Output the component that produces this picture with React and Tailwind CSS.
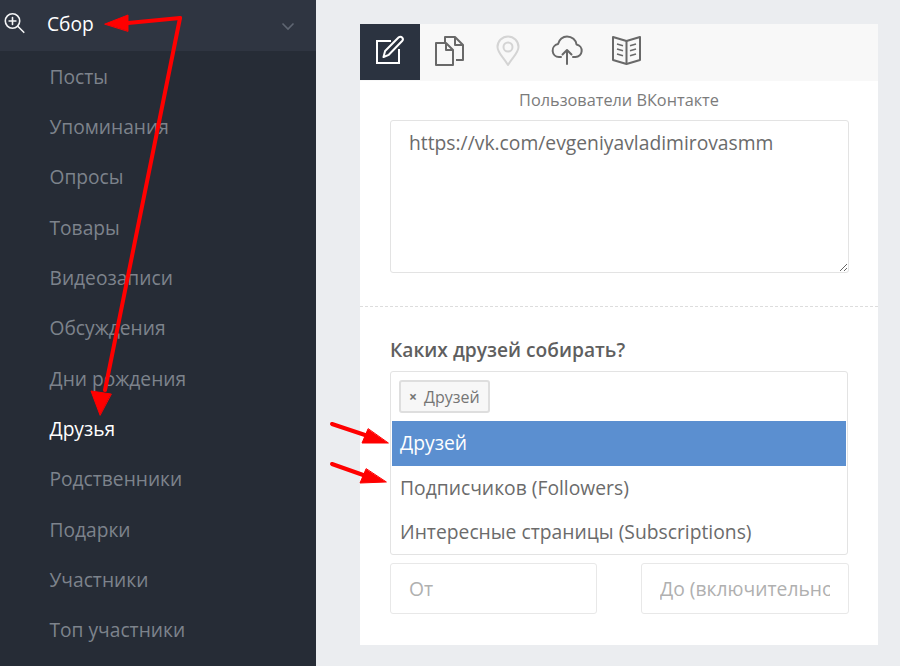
import React from "react";

const navItems = [
  "Посты",
  "Упоминания",
  "Опросы",
  "Товары",
  "Видеозаписи",
  "Обсуждения",
  "Дни рождения",
  "Друзья",
  "Родственники",
  "Подарки",
  "Участники",
  "Топ участники",
];

const Sidebar = () => (
  <aside className="w-[316px] shrink-0 h-full bg-[#262c36] overflow-hidden">
    <div className="h-[51px] bg-[#2f3541] flex items-center">
      <svg width="24" height="24" viewBox="0 0 24 24" fill="none" stroke="#f4f5f6" strokeWidth="1.6" strokeLinecap="round" className="ml-[2px] mt-[-5px]">
        <circle cx="10.5" cy="10" r="7.2" />
        <path d="M10.5 6.6v6.8M7.1 10h6.8M15.8 15.3l6 6" />
      </svg>
      <span className="ml-[21px] mt-[-2px] text-[19.2px] text-white font-medium">Сбор</span>
      <svg width="14" height="14" viewBox="0 0 14 14" fill="none" stroke="#5f6672" strokeWidth="1.6" className="ml-auto mr-[21px]">
        <path d="M1.5 4.5 7 10l5.5-5.5" />
      </svg>
    </div>
    <nav className="flex flex-col pt-[0.8px]">
      {navItems.map((item) => (
        <a
          key={item}
          className={`h-[50.35px] flex items-center pl-[49.5px] text-[19.2px] ${
            item === "Друзья" ? "text-white font-medium" : "text-[#7d838c]"
          }`}
        >
          {item}
        </a>
      ))}
    </nav>
  </aside>
);

const Tabs = () => (
  <div className="h-[57px] bg-[#f8f8f8] flex items-start">
    <div className="w-[60px] h-[56px] pb-[4px] bg-[#2b3340] flex items-center justify-center">
      <svg width="30" height="30" viewBox="0 0 30 30" fill="none" stroke="#fff" strokeWidth="2">
        <path d="M16 6H2v22h22V14" />
        <path d="M8.5 22l1.6-6L23.500 2.500c1.200-1.100 2.700-1 3.600 0 1 1 1 2.400 0 3.500L13.800 19.800z" strokeLinejoin="round" />
      </svg>
    </div>
    <div className="w-[58px] h-[56px] pb-[4px] flex items-center justify-center">
      <svg width="31" height="31" viewBox="0 0 31 31" fill="none" stroke="#696969" strokeWidth="2" strokeLinejoin="round">
        <path d="M12 8H2v22h17V15z" />
        <path d="M12 8v7h7" />
        <path d="M11 8V2h10l8 8v15h-7" />
        <path d="M21 2v8h8" />
      </svg>
    </div>
    <div className="w-[60px] h-[56px] pb-[4px] flex items-center justify-center">
      <svg width="24" height="31" viewBox="0 0 24 31" fill="none" stroke="#d4d4d4" strokeWidth="2">
        <path d="M12 30C7 22 1.500 17.500 1.500 12a10.500 10.500 0 0 1 21 0c0 5.500-5.500 10-10.500 18z" strokeLinejoin="round" />
        <circle cx="12" cy="12" r="4.500" />
      </svg>
    </div>
    <div className="w-[58px] h-[56px] pb-[4px] flex items-center justify-center">
      <svg width="32" height="30" viewBox="0 0 32 30" fill="none" stroke="#696969" strokeWidth="2" strokeLinecap="round" strokeLinejoin="round">
        <path d="M10 22H8a6.500 6.500 0 0 1-1-12.900C8 4.500 12 1.500 16 1.500c5 0 9 3.500 9.500 8A6.300 6.300 0 0 1 24.500 22H22" />
        <path d="M16 29V15M11.500 19.500 16 15l4.500 4.500" />
      </svg>
    </div>
    <div className="w-[60px] h-[56px] pb-[4px] flex items-center justify-center">
      <svg width="31" height="31" viewBox="0 0 31 31" fill="none" stroke="#696969" strokeWidth="2" strokeLinejoin="round">
        <path d="M15.500 6 2 2v23l13.500 4 13.500-4V2z" />
        <path d="M15.500 6v23" />
        <path d="M6 9l6 1.800M6 14l6 1.800M6 19l6 1.800M25 9l-6 1.800M25 14l-6 1.800M25 19l-6 1.800" strokeWidth="1.600" />
      </svg>
    </div>
  </div>
);

const FriendsSelect = () => (
  <div className="border border-[#e3e3e3] rounded-[3px] bg-white px-px">
    <div className="h-[49px] flex items-center pl-[7px]">
      <span className="h-[33px] w-[91px] flex items-center gap-[7px] pl-[8px] border-2 border-[#dedede] rounded-[3px] bg-[#f7f7f7] text-[16px] text-[#757575]">
        <span className="text-[14px] font-bold">×</span>
        Друзей
      </span>
    </div>
    <div className="h-[45px] flex items-center pl-[8px] bg-[#5b8fd0] text-white text-[19.3px]">Друзей</div>
    <div className="h-[45px] flex items-center pl-[8px] text-[#6b6b6b] text-[19.3px]">Подписчиков (Followers)</div>
    <div className="h-[43px] flex items-center pl-[8px] text-[#6b6b6b] text-[19.3px]">Интересные страницы (Subscriptions)</div>
  </div>
);

const FormPanel = () => (
  <div className="w-[518px] h-[621px] mt-[24px] ml-[44px] bg-white flex flex-col overflow-hidden">
    <Tabs />
    <p className="mt-[8px] h-[22px] flex items-center justify-center text-[16.3px] text-[#7b7b7b]">
      Пользователи ВКонтакте
    </p>
    <div className="mx-[30px] mt-[9px] relative">
      <textarea
        readOnly
        value="https://vk.com/evgeniyavladimirovasmm"
        className="block w-[459px] h-[153px] border border-[#e3e3e3] rounded-[3px] px-[18px] py-[8px] text-[19.3px] text-[#6b6b6b] outline-none resize-y"
      />
    </div>
    <div className="mt-[33px] border-t border-dashed border-[#dddddd]" />
    <div className="px-[30px] flex flex-col">
      <h3 className="mt-[30px] h-[26px] flex items-center text-[19.2px] font-semibold text-[#5f5f5f]">
        Каких друзей собирать?
      </h3>
      <div className="mt-[8px]">
        <FriendsSelect />
      </div>
      <div className="mt-[8px] w-[459px] flex justify-between">
        <input
          placeholder="От"
          className="w-[207px] h-[51px] border border-[#e8e8e8] rounded-[3px] px-[18px] text-[19.3px] outline-none placeholder:text-[#b0b0b0]"
        />
        <input
          placeholder="До (включительно)"
          className="w-[208px] h-[51px] border border-[#e8e8e8] rounded-[3px] px-[18px] text-[19.3px] outline-none placeholder:text-[#b0b0b0]"
        />
      </div>
    </div>
  </div>
);

// red annotation arrows drawn on top of the screenshot
const Arrows = () => (
  <svg width="900" height="666" viewBox="0 0 900 666" className="absolute inset-0 pointer-events-none">
    <g fill="#ff0000" stroke="#ff0000" strokeLinecap="round" strokeLinejoin="round">
      <path d="M180 18 128 23" strokeWidth="4" fill="none" />
      <path d="M105 24 128 15 128 31z" strokeWidth="1" />
      <path d="M180 18 105 390" strokeWidth="4" fill="none" />
      <path d="M100 415 91 391 111 394z" strokeWidth="1" />
      <path d="M332 424 368 436" strokeWidth="4" fill="none" />
      <path d="M388 443 362 443 368 429z" strokeWidth="1" />
      <path d="M332 464 366 476" strokeWidth="4" fill="none" />
      <path d="M386 482 360 483 366 469z" strokeWidth="1" />
    </g>
  </svg>
);

export default function App() {
  return (
    <div className="relative w-[900px] h-[666px] flex overflow-hidden bg-[#ebedf0] font-['Open_Sans',sans-serif]">
      <Sidebar />
      <FormPanel />
      <Arrows />
    </div>
  );
}
